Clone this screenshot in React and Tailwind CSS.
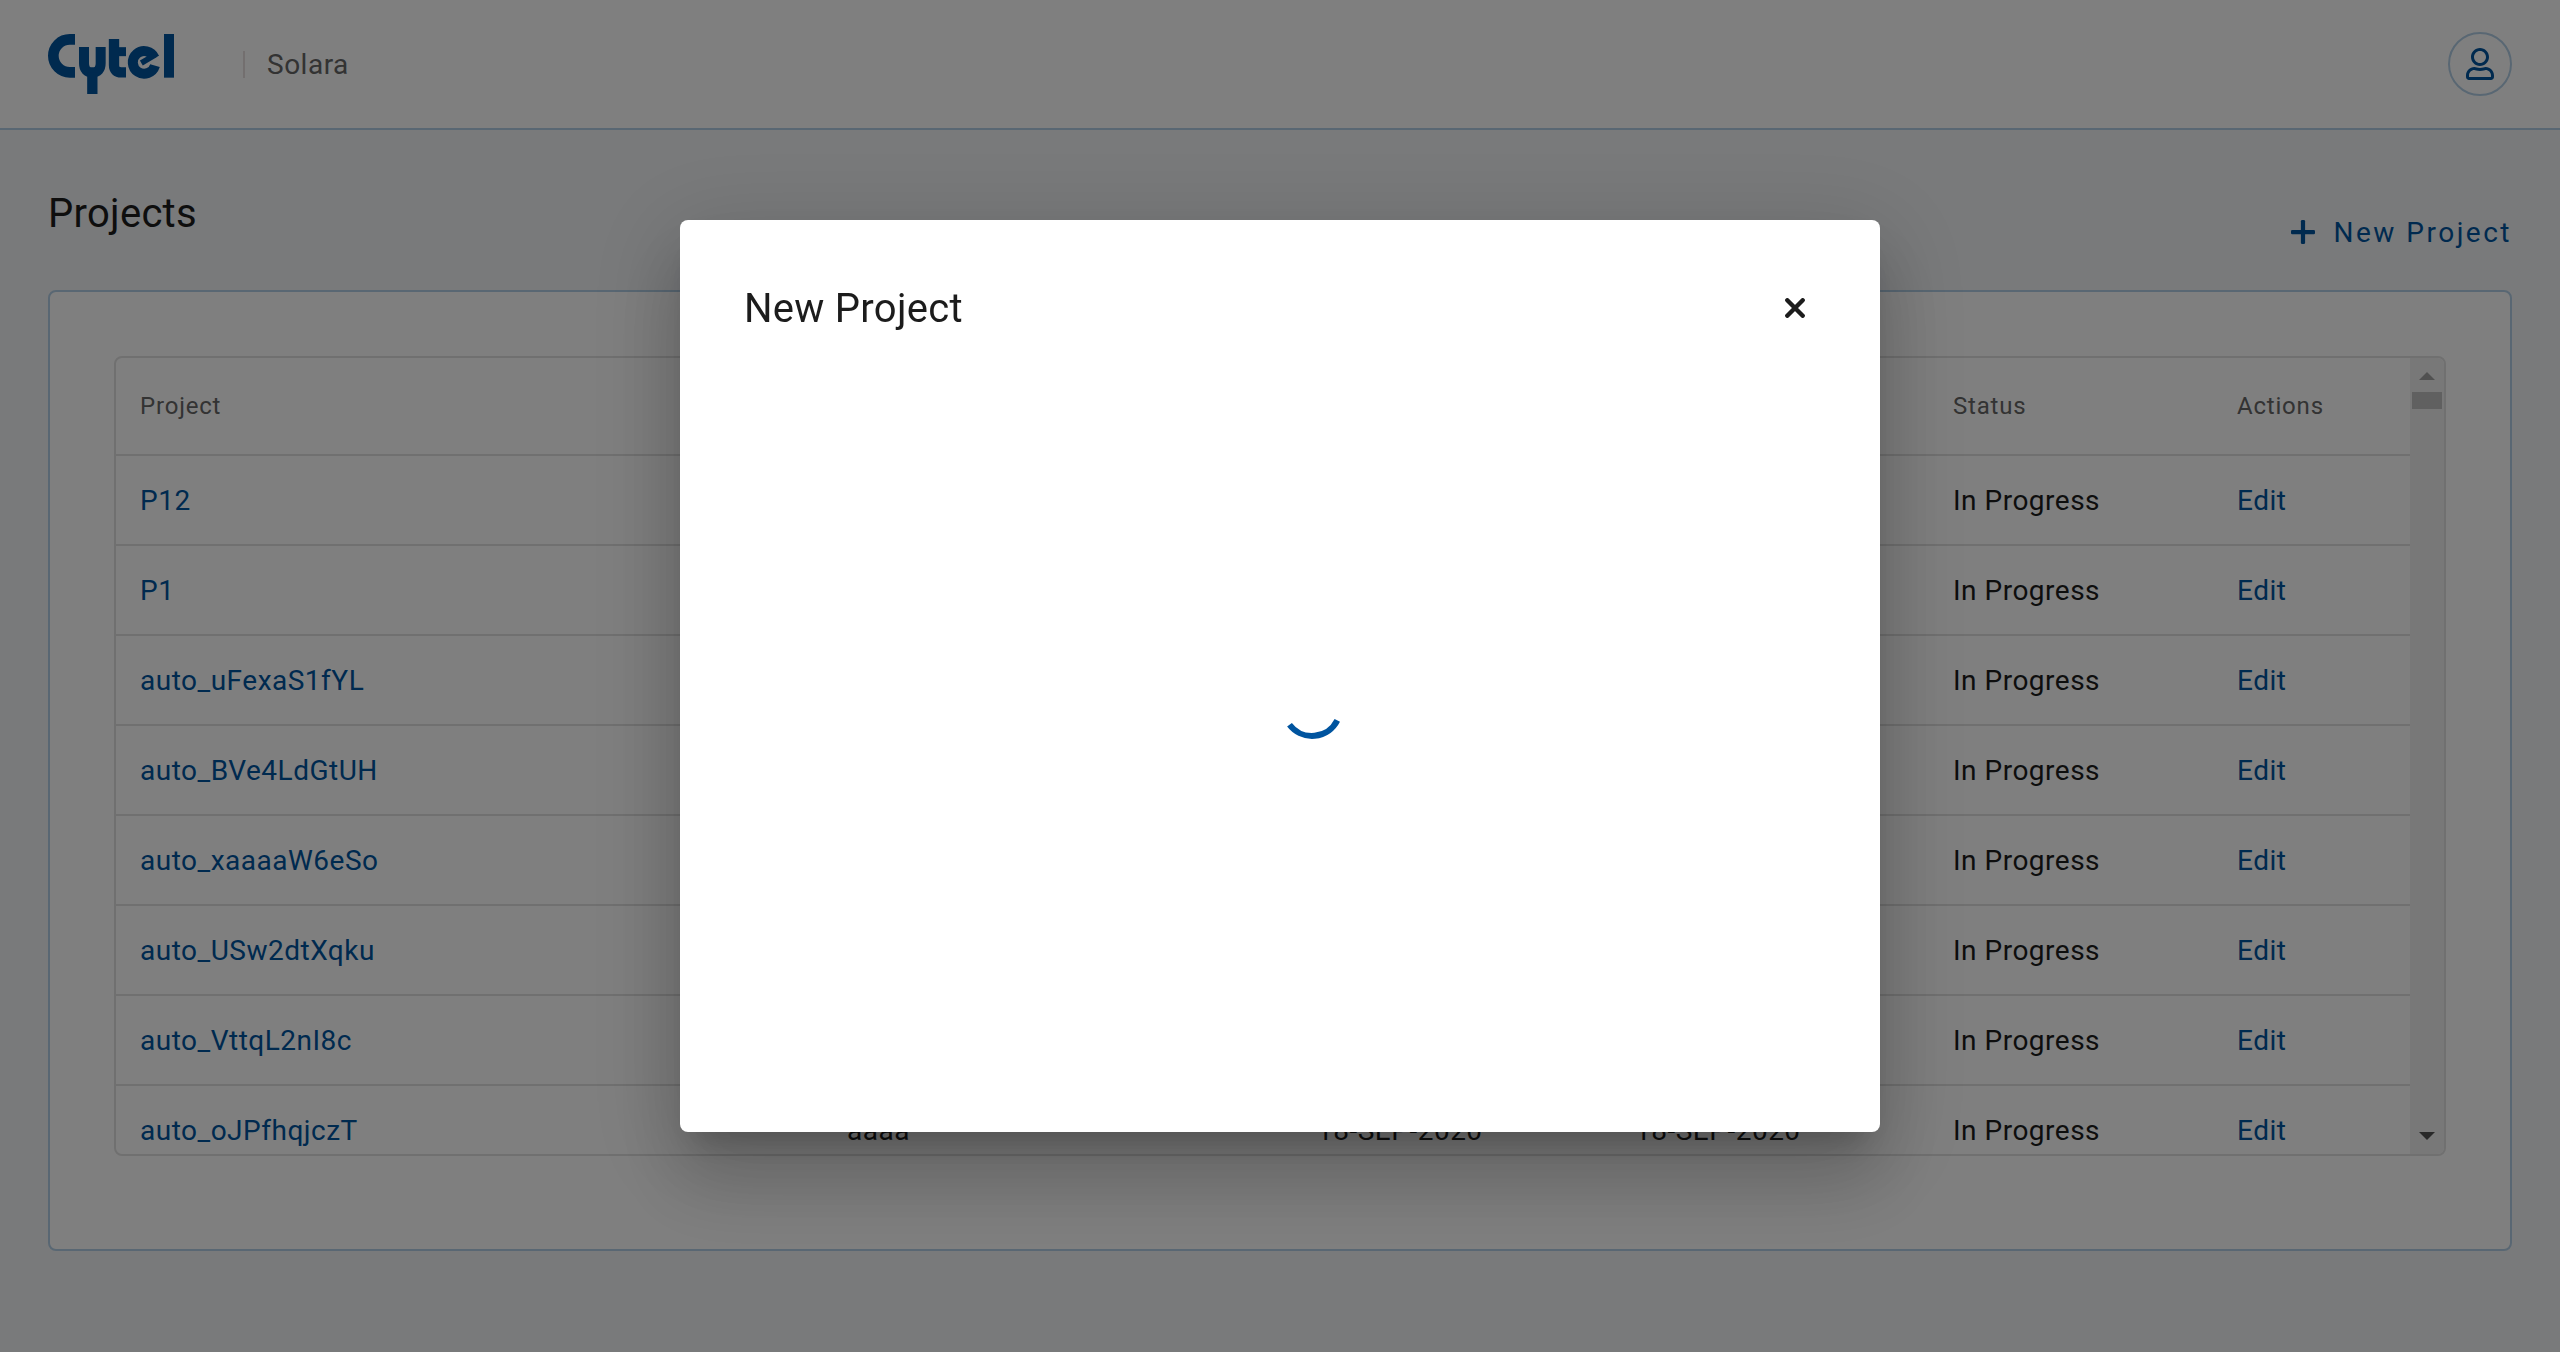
import { FaRegUser } from "react-icons/fa";

const rows = [
  { name: "P12", desc: "", created: "", modified: "" },
  { name: "P1", desc: "", created: "", modified: "" },
  { name: "auto_uFexaS1fYL", desc: "aaaa", created: "18-SEP-2020", modified: "18-SEP-2020" },
  { name: "auto_BVe4LdGtUH", desc: "aaaa", created: "18-SEP-2020", modified: "18-SEP-2020" },
  { name: "auto_xaaaaW6eSo", desc: "aaaa", created: "18-SEP-2020", modified: "18-SEP-2020" },
  { name: "auto_USw2dtXqku", desc: "aaaa", created: "18-SEP-2020", modified: "18-SEP-2020" },
  { name: "auto_VttqL2nI8c", desc: "aaaa", created: "18-SEP-2020", modified: "18-SEP-2020" },
  { name: "auto_oJPfhqjczT", desc: "aaaa", created: "18-SEP-2020", modified: "18-SEP-2020" },
];

const columns = "grid grid-cols-[707px_470px_318px_318px_284px_1fr] items-center pl-6";

function Logo() {
  return (
    <svg className="h-[60px] w-[126px]" viewBox="54 72 378 180" fill="none" stroke="#00549f" aria-label="Cytel">
      <path d="M135 88H119.5A49.5 49.5 0 0 0 119.5 187H135" strokeWidth="32" />
      <path d="M162 111V160Q162 187 187 187Q212 187 212 160V111" strokeWidth="30" />
      <path d="M187 187V252" strokeWidth="31" />
      <path d="M252 87V165Q252 187 274 187H288" strokeWidth="31" />
      <path d="M252 125H288" strokeWidth="27" />
      <path d="M373.5 143.3A34 34 0 1 0 375 167" strokeWidth="30" />
      <path d="M334 159L378 133" strokeWidth="17" />
      <path d="M417 72V203" strokeWidth="30" />
    </svg>
  );
}

function Header() {
  return (
    <header className="flex h-[130px] items-center border-b-2 border-[#b2cfe6] bg-white px-12">
      <Logo />
      <div className="ml-[69px] h-[27px] w-0.5 bg-[#e6dfdf]" />
      <span className="mt-0.5 ml-[22px] text-[28px] leading-8 tracking-[0.5px] text-[#666]">Solara</span>
      <div className="ml-auto flex size-16 items-center justify-center rounded-full border-2 border-[#b2cfe6] text-[#00549f]">
        <FaRegUser className="size-8" />
      </div>
    </header>
  );
}

function Scrollbar() {
  return (
    <div className="flex w-[34px] shrink-0 flex-col items-center bg-[#f1f1f1]">
      <svg className="mt-3.5 h-2 w-4 shrink-0" viewBox="0 0 16 8">
        <path d="M0 8L8 0L16 8Z" fill="#a3a3a3" />
      </svg>
      <div className="mt-3 h-[17px] w-[30px] bg-[#c1c1c1]" />
      <svg className="mt-auto mb-3.5 h-2 w-4 shrink-0" viewBox="0 0 16 8">
        <path d="M0 0L8 8L16 0Z" fill="#505050" />
      </svg>
    </div>
  );
}

function ProjectTable() {
  return (
    <div className="flex h-[800px] overflow-hidden rounded-lg border-2 border-[#e0e0e0]">
      <div className="flex-1 overflow-hidden text-[28px] tracking-[0.5px] text-[#1c1c1c]">
        <div className={`${columns} h-[98px] border-b-2 border-[#e0e0e0] text-2xl tracking-[0.8px] text-[#666]`}>
          <span>Project</span>
          <span></span>
          <span></span>
          <span></span>
          <span>Status</span>
          <span>Actions</span>
        </div>
        {rows.map((row) => (
          <div key={row.name} className={`${columns} h-[90px] border-b-2 border-[#e0e0e0] pt-0.5`}>
            <span className="text-[#00549f]">{row.name}</span>
            <span>{row.desc}</span>
            <span>{row.created}</span>
            <span>{row.modified}</span>
            <span>In Progress</span>
            <span className="text-[#00549f]">Edit</span>
          </div>
        ))}
      </div>
      <Scrollbar />
    </div>
  );
}

function NewProjectDialog() {
  return (
    <div className="flex h-[912px] w-[1200px] flex-col rounded-lg bg-white shadow-[0_22px_30px_-14px_rgba(0,0,0,0.2),0_48px_76px_6px_rgba(0,0,0,0.14),0_18px_92px_16px_rgba(0,0,0,0.12)]">
      <div className="flex h-44 shrink-0 items-center justify-between pr-[75px] pl-16">
        <h2 className="mt-0.5 text-[40px] leading-[48px] tracking-[0.28px] text-[#1c1c1c]">New Project</h2>
        <svg className="size-5" viewBox="0 0 20 20" stroke="#1c1c1c" strokeWidth="4.4" strokeLinecap="round">
          <path d="M2.3 2.3L17.7 17.7M17.7 2.3L2.3 17.7" />
        </svg>
      </div>
      <div className="flex flex-1 justify-center pt-[280px] pl-16">
        <svg className="size-16" viewBox="0 0 64 64" fill="none" stroke="#00549f" strokeWidth="6">
          <path d="M9.5 48.8A28.3 28.3 0 0 0 57.3 44.4" />
        </svg>
      </div>
    </div>
  );
}

export default function App() {
  return (
    <div className="h-[1352px] w-[2560px] overflow-hidden bg-[#f2f4f7] font-['Roboto',sans-serif]">
      <Header />
      <main className="px-12">
        <div className="flex h-40 items-start justify-between">
          <h1 className="mt-[60px] text-[40px] leading-[48px] tracking-[0.28px] text-[#1c1c1c]">Projects</h1>
          <button className="mt-[81px] flex items-center gap-[18px] text-[28px] leading-10 tracking-[2.5px] text-[#00549f]">
            <svg className="size-6" viewBox="0 0 24 24" fill="currentColor">
              <rect x="0" y="10" width="24" height="4.2" rx="1.3" />
              <rect x="9.9" y="0" width="4.2" height="24" rx="1.3" />
            </svg>
            <span className="pt-0.5">New Project</span>
          </button>
        </div>
        <section className="h-[961px] rounded-lg border-2 border-[#b2cfe6] bg-white p-16">
          <ProjectTable />
        </section>
      </main>
      <div className="fixed inset-0 flex items-center justify-center bg-black/50">
        <NewProjectDialog />
      </div>
    </div>
  );
}
